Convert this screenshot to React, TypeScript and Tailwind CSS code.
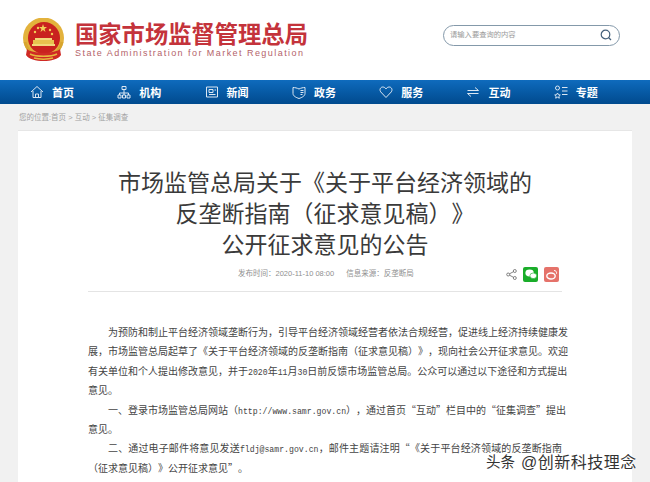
import React from "react";

const cjk = '"Liberation Sans","Noto Sans CJK SC",sans-serif';

function Emblem() {
  return (
    <svg width="44" height="46" viewBox="0 0 44 46">
      <circle cx="21.500" cy="20" r="20.500" fill="#e3b23c" />
      <circle cx="22" cy="20" r="16" fill="#c9221f" />
      <path d="M3 24c2 8 6 12 11 14M40 24c-2 8-6 12-11 14" stroke="#d7a52e" strokeWidth="3" fill="none" />
      <polygon points="21,6 22,9 25,9 22.600,11 23.500,14 21,12 18.500,14 19.400,11 17,9 20,9" fill="#f1cf58" />
      <circle cx="13" cy="14" r="1.200" fill="#f1cf58" />
      <circle cx="28" cy="12" r="1.200" fill="#f1cf58" />
      <circle cx="30" cy="16" r="1.200" fill="#f1cf58" />
      <circle cx="16" cy="10" r="1.200" fill="#f1cf58" />
      <rect x="13" y="20" width="17" height="2" fill="#f2d87a" />
      <rect x="11" y="22" width="21" height="4" fill="#e8c24e" />
      <rect x="10" y="26" width="23" height="2" fill="#f2d87a" />
      <path d="M5 31c5 5 28 5 33 0l1 6c-5 8-30 8-35 0z" fill="#cf2a25" />
      <path d="M8 36c6 3 21 3 27 0M12 40c5 1.500 14 1.500 19 0" stroke="#e6b93f" strokeWidth="1.500" fill="none" />
    </svg>
  );
}

const S = { stroke: "#dbe7f3", strokeWidth: 1, fill: "none" } as const;

const navIcons: React.ReactNode[] = [
  <svg width="14" height="14" viewBox="0 0 14 14" {...S}>
    <path d="M1 7 7 1.500 13 7M3 6v6.500h8V6M5.500 12.500V9h3v3.500" />
  </svg>,
  <svg width="14" height="14" viewBox="0 0 14 14" {...S}>
    <path d="M5 1.500h4v3H5zM7 4.500V8M2.500 10V8h9v2M7 8v2M1 10h3v3H1zM5.500 10h3v3h-3zM10 10h3v3h-3z" />
  </svg>,
  <svg width="14" height="14" viewBox="0 0 14 14" {...S}>
    <path d="M1.500 2h11v10h-11zM4 4.500h4v3H4zM4 9.500h6.500M9.500 5h1.500" />
  </svg>,
  <svg width="14" height="14" viewBox="0 0 14 14" {...S}>
    <path d="M1 2.500c2 0 4 .5 6 1.500 2-1 4-1.500 6-1.500v6c0 2.500-3 4-6 5-3-1-6-2.500-6-5zM8.500 5.500h3M8.500 7.500h3M8.500 9.500h2" />
  </svg>,
  <svg width="14" height="14" viewBox="0 0 14 14" {...S}>
    <path d="M7 12.500 1.800 7C.2 5 1.200 2 3.800 2 5.300 2 6.300 2.800 7 4c.7-1.200 1.700-2 3.200-2 2.600 0 3.600 3 2 5z" />
  </svg>,
  <svg width="14" height="14" viewBox="0 0 14 14" {...S}>
    <path d="M1.500 5.500h11L9 2.500M12.500 8.500h-11L5 11.500" />
  </svg>,
  <svg width="14" height="14" viewBox="0 0 14 14" {...S}>
    <circle cx="3.500" cy="3" r="2" />
    <path d="M3.500 8l1 1.800 1.800.2-1.400 1.300.4 1.900-1.800-1-1.800 1 .4-1.900L.7 10l1.800-.2zM8 2.500h5.500M8 6h5.500M8 9.500h5.500" />
  </svg>,
];

const navLabels = ["首页", "机构", "新闻", "政务", "服务", "互动", "专题"];

function Line({ children, indent, full }: { children: React.ReactNode; indent?: boolean; full?: boolean }) {
  return (
    <div
      className={`h-[19.400px] whitespace-nowrap ${indent ? "pl-[20px]" : ""} ${full ? "[text-align-last:justify]" : ""}`}
    >
      {children}
    </div>
  );
}

function M({ children }: { children: React.ReactNode }) {
  return <span className="text-[8.200px] font-['Liberation_Mono']">{children}</span>;
}

export default function App() {
  return (
    <div
      className="relative w-[650px] h-[482px] overflow-hidden bg-[#f1f1f1] [text-spacing-trim:space-all]"
      style={{ fontFamily: cjk }}
    >
      <header className="h-[80px] bg-white flex items-center pl-[22px] pr-[30px]">
        <div className="mt-[2px]">
          <Emblem />
        </div>
        <div className="ml-[9px] flex flex-col w-[240px]">
          <div className="text-[23.300px] leading-[26px] font-bold text-[#c4333b] whitespace-nowrap">
            国家市场监督管理总局
          </div>
          <div className="text-[9px] leading-[11px] text-[#b4636a] tracking-[1.450px] whitespace-nowrap font-['Liberation_Sans']">
            State Administration for Market Regulation
          </div>
        </div>
        <div className="ml-auto mb-[10px] w-[177px] h-[21px] rounded-full border border-[#8499aa] bg-white flex items-center pl-[6px] pr-[7px]">
          <span className="text-[7.300px] text-[#9a9a9a] whitespace-nowrap">请输入要查询的内容</span>
          <svg className="ml-auto" width="12" height="12" viewBox="0 0 12 12" fill="none" stroke="#44607a" strokeWidth="1.200">
            <circle cx="5.500" cy="5.500" r="4.300" />
            <path d="M8.500 8.500 11 11" />
          </svg>
        </div>
      </header>

      <nav className="h-[24px] flex items-center pl-[30px] bg-gradient-to-b from-[#0f6bbd] to-[#014a8e]">
        {navLabels.map((label, i) => (
          <div key={label} className="w-[87.300px] flex items-center gap-[8px]">
            {navIcons[i]}
            <span className="mt-[2px] text-[11px] font-bold text-white leading-none">{label}</span>
          </div>
        ))}
      </nav>

      <div className="h-[26px] flex items-center pt-[2px] pl-[19px] text-[7.500px] text-[#a3a3a3] whitespace-nowrap">
        您的位置:首页 &gt; 互动 &gt; 征集调查
      </div>

      <main className="mx-[18px] h-[400px] bg-white border-t border-[#e6e6e6] px-[70px]">
        <h1 className="pt-[37px] text-center text-[23px] leading-[31px] font-normal text-[#3a3a3a] -mx-[10px]">
          <div>市场监管总局关于《关于平台经济领域的</div>
          <div>反垄断指南（征求意见稿）》</div>
          <div>公开征求意见的公告</div>
        </h1>
        <div className="h-[26px] flex items-center pl-[150px] pr-[3px] text-[7.500px] text-[#8f8f8f] whitespace-nowrap">
          <span>发布时间：2020-11-10 08:00</span>
          <span className="ml-[12px]">信息来源：反垄断局</span>
          <div className="ml-auto flex items-center">
            <svg width="11" height="11" viewBox="0 0 11 11" fill="none" stroke="#666" strokeWidth="0.800">
              <circle cx="2.200" cy="5.500" r="1.500" />
              <circle cx="8.800" cy="2" r="1.500" />
              <circle cx="8.800" cy="9" r="1.500" />
              <path d="M3.500 4.800 7.500 2.700M3.500 6.200l4 2.100" />
            </svg>
            <div className="ml-[6px] w-[15px] h-[15px] rounded-[2px] bg-[#1aad2a] flex items-center justify-center">
              <svg width="12" height="11" viewBox="0 0 12 11" fill="#fff">
                <ellipse cx="4.600" cy="4" rx="4.200" ry="3.400" />
                <ellipse cx="8.300" cy="6.800" rx="3.400" ry="2.800" stroke="#1aad2a" strokeWidth="0.600" />
              </svg>
            </div>
            <div className="ml-[6px] w-[15px] h-[15px] rounded-[2px] bg-[#e5726a] flex items-center justify-center">
              <svg width="12" height="11" viewBox="0 0 12 11" fill="none" stroke="#fff">
                <ellipse cx="5" cy="7" rx="4.200" ry="3" strokeWidth="1.400" />
                <path d="M8 1.500c1.500 0 3 1 2.500 3.200" strokeWidth="1" />
              </svg>
            </div>
          </div>
        </div>
        <div className="mt-[4px] h-px bg-[#e4e4e4]" />
        <div className="mt-[30px] text-[10px] leading-[19.400px] text-[#444] font-['Noto_Sans_CJK_SC']">
          <Line indent full>为预防和制止平台经济领域垄断行为，引导平台经济领域经营者依法合规经营，促进线上经济持续健康发</Line>
          <Line full>展，市场监管总局起草了《关于平台经济领域的反垄断指南（征求意见稿）》，现向社会公开征求意见。欢迎</Line>
          <Line full>有关单位和个人提出修改意见，并于<M>2020</M>年<M>11</M>月<M>30</M>日前反馈市场监管总局。公众可以通过以下途径和方式提出</Line>
          <Line>意见。</Line>
          <Line indent full>一、登录市场监管总局网站（<M>http://www.samr.gov.cn</M>），通过首页“互动”栏目中的“征集调查”提出</Line>
          <Line>意见。</Line>
          <Line indent full>二、通过电子邮件将意见发送<M>fldj@samr.gov.cn</M>，邮件主题请注明“《关于平台经济领域的反垄断指南</Line>
          <Line>（征求意见稿）》公开征求意见”。</Line>
        </div>
      </main>

      <div className="absolute left-[486px] top-[451px] flex items-center text-[#333] whitespace-nowrap [text-shadow:0_0_2px_#fff,0_0_2px_#fff,0_0_2px_#fff]">
        <span className="text-[14.500px]">头条</span>
        <span className="ml-[6px] text-[16px] tracking-[0.500px]">@创新科技理念</span>
      </div>
    </div>
  );
}
